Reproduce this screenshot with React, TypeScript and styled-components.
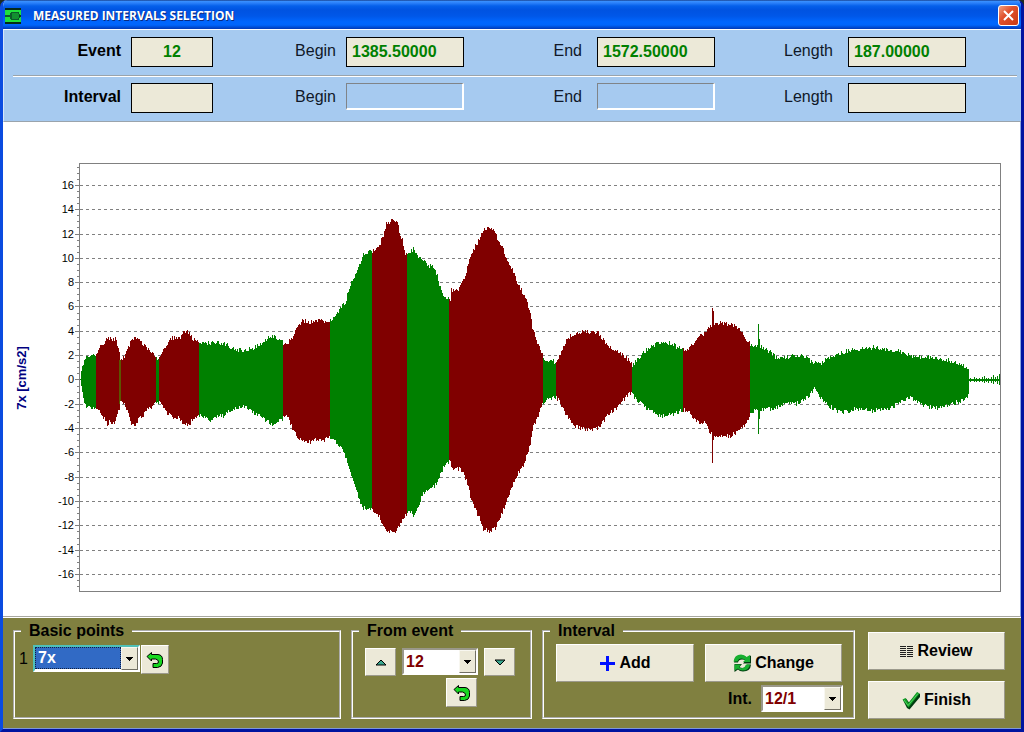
import React from "react";
import styled, { createGlobalStyle, css } from "styled-components";

const GlobalStyle = createGlobalStyle`
  * { box-sizing: border-box; }
  body {
    margin: 0;
    background: #1d2b1f;
    font-family: "Liberation Sans", Arial, sans-serif;
    font-size: 16px;
    line-height: 18px;
    color: #000;
  }
`;

const Window = styled.main`
  display: flex;
  flex-direction: column;
  min-height: 100vh;
  border: solid;
  border-width: 0 3px 3px;
  border-color: #0a4be0 #0014a0 #0014a0 #0a4be0;
  border-radius: 7px 7px 0 0;
  background: #fff;
  overflow: hidden;
`;

const TitleBar = styled.header`
  display: flex;
  align-items: center;
  gap: 12px;
  height: 29px;
  margin: 0 -3px;
  padding: 2px 5px 0;
  background: linear-gradient(
    #0a246a 0,
    #3b93ff 1px,
    #2a80fa 3px,
    #0560ea 6px,
    #0053e1 10px,
    #0057e8 16px,
    #0066fe 22px,
    #0065fb 25px,
    #0044c8 28px,
    #0138b4 29px
  );
`;

const Title = styled.h1`
  flex: 1;
  margin: 0;
  font: bold 12px/16px "Open Sans", sans-serif;
  color: #fff;
  text-shadow: 1px 1px #0a2a80;
`;

const CloseButton = styled.button`
  display: grid;
  place-items: center;
  width: 21px;
  height: 21px;
  padding: 0;
  border: 1px solid #fff;
  border-radius: 3px;
  background: linear-gradient(135deg, #f0a080, #e0512c 40%, #c83a14);
`;

const Header = styled.section`
  padding-top: 1px;
  border-top: 1px solid #fff;
  border-left: 1px solid #d6e6fa;
  border-bottom: 1px solid #9aa4ac;
  background: #a6caf0;
`;

const FieldRow = styled.div`
  display: grid;
  grid-template-columns: 127px 82px 133fr 118px 133fr 118px 133fr 118px 55fr;
  align-items: start;
  padding: 6px 0 8px;
`;

const Divider = styled.hr`
  height: 2px;
  margin: 0 4px 0 9px;
  border: 0;
  border-top: 1px solid #9aa4ac;
  border-bottom: 1px solid #fff;
`;

const FieldLabel = styled.label<{ $strong?: boolean; $gap: number }>`
  padding-top: 5px;
  padding-right: ${(p) => p.$gap}px;
  text-align: right;
  font-weight: ${(p) => (p.$strong ? "bold" : "normal")};
  color: ${(p) => (p.$strong ? "#000" : "#101828")};
`;

const Field = styled.input<{ $inset?: boolean; $center?: boolean }>`
  width: 100%;
  min-width: 0;
  height: 30px;
  padding: 0 5px;
  border: 1px solid #000;
  border-radius: 0;
  background: #ece9d8;
  font: bold 16px/18px "Liberation Sans", Arial, sans-serif;
  color: #008000;
  text-align: ${(p) => (p.$center ? "center" : "left")};
  ${(p) =>
    p.$inset &&
    css`
      height: 27px;
      border: 2px solid;
      border-color: #808488 #fff #fff #808488;
      border-width: 1px 2px 2px 1px;
      background: transparent;
    `}
`;

const ChartArea = styled.section`
  flex: 1;
  display: flex;
  align-items: flex-start;
  border-right: 1px solid #8aa6e0;
`;

const ChartSvg = styled.svg`
  display: block;
  width: 100%;
  height: auto;
  font-family: "Liberation Sans", Arial, sans-serif;
`;

const Footer = styled.footer`
  display: flex;
  align-items: flex-start;
  gap: 10px;
  padding: 4px 16px 9px 10px;
  border-top: 1px solid #fff;
  border-bottom: 1px solid #7f97d8;
  box-shadow: 0 -1px #a8a8a0;
  background: #808040;
`;

const Group = styled.fieldset<{ $width?: number }>`
  ${(p) => (p.$width ? `flex: none; width: ${p.$width}px;` : "flex: 1;")}
  min-width: 0;
  height: 97px;
  margin: 0;
  padding: 0;
  border: 2px groove #fff;
`;

const Legend = styled.legend`
  margin-left: 6px;
  padding: 0 8px;
  font-weight: bold;
`;

const PointRow = styled.div`
  display: flex;
  align-items: flex-start;
  gap: 1px;
  padding: 5px 4px;
`;

const PointLabel = styled.label`
  width: 13px;
  padding-top: 5px;
`;

const Stepper = styled.div`
  display: flex;
  gap: 6px;
  padding: 8px 0 0 12px;
`;

const ResetRow = styled.div`
  display: flex;
  padding: 2px 0 0 93px;
`;

const ActionRow = styled.div`
  display: flex;
  gap: 11px;
  padding: 4px 10px 0 12px;
`;

const PickRow = styled.div`
  display: flex;
  justify-content: flex-end;
  align-items: center;
  gap: 9px;
  padding: 3px 10px 0;
  font-weight: bold;
`;

const CommandColumn = styled.div`
  display: flex;
  flex-direction: column;
  gap: 11px;
  width: 137px;
  margin-left: 3px;
  padding-top: 10px;
`;

const Button = styled.button<{ $width?: number; $height?: number }>`
  display: flex;
  align-items: center;
  justify-content: center;
  gap: 4px;
  ${(p) => (p.$width ? `flex: none; width: ${p.$width}px;` : "flex: 1 0 auto;")}
  height: ${(p) => p.$height ?? 38}px;
  padding: 0;
  border: 1px solid;
  border-color: #fff #9c9a8c #9c9a8c #fff;
  border-radius: 0;
  background: #ece9d8;
  font: bold 16px/18px "Liberation Sans", Arial, sans-serif;
  color: #000;
`;

const SelectBox = styled.div<{ $width: number; $active?: boolean }>`
  display: grid;
  grid-template-columns: 1fr 17px;
  width: ${(p) => p.$width}px;
  height: 27px;
  border: 2px solid;
  border-color: ${(p) => (p.$active ? "#4fc0b8 #fff #fff #4fc0b8" : "#9a988a #fff #fff #9a988a")};
  background: #fff;
`;

const NativeSelect = styled.select<{ $active?: boolean }>`
  grid-area: 1 / 1 / 2 / 3;
  appearance: none;
  min-width: 0;
  margin: ${(p) => (p.$active ? "0 17px 1px 0" : "0")};
  padding: 0 2px;
  border: ${(p) => (p.$active ? "1px dotted #102040" : "0")};
  border-radius: 0;
  background: ${(p) => (p.$active ? "#316ac5" : "#fff")};
  font: bold 16px/18px "Liberation Sans", Arial, sans-serif;
  color: ${(p) => (p.$active ? "#fff" : "#800000")};
`;

const DropMark = styled.span`
  grid-area: 1 / 2 / 2 / 3;
  display: grid;
  place-items: center;
  border: 1px solid;
  border-color: #f8f7f0 #716f64 #716f64 #f8f7f0;
  background: #ece9d8;
  pointer-events: none;
`;

type PickerProps = { id: string; width: number; value: string; label?: string; active?: boolean };

function Picker({ id, width, value, label, active }: PickerProps) {
  return (
    <SelectBox $width={width} $active={active}>
      <NativeSelect id={id} aria-label={label} $active={active} defaultValue={value}>
        <option>{value}</option>
      </NativeSelect>
      <DropMark aria-hidden="true">
        <svg width="7" height="4" shapeRendering="crispEdges">
          <path d="M0 0h7v1h-7zM1 1h5v1h-5zM2 2h3v1h-3zM3 3h1v1h-1z" />
        </svg>
      </DropMark>
    </SelectBox>
  );
}

const AppIcon = () => (
  <svg width="16" height="16" shapeRendering="crispEdges" aria-hidden="true">
    <rect width="16" height="16" fill="#062a18" />
    <rect y="2" width="16" height="12" fill="#1fe03c" />
    <path d="M6 4h8v2h1v4h-1v2H6v-1H5V9H0V7h5V5h1z" fill="#0b5a2a" />
    <path d="M7 5h6v1h1v4h-1v1H7z" fill="#129030" />
    <rect x="14" y="7" width="2" height="2" fill="#06381c" />
  </svg>
);

const CloseIcon = () => (
  <svg width="13" height="13" viewBox="0 0 13 13" aria-hidden="true">
    <path d="M2 2l9 9M11 2l-9 9" stroke="#fff" strokeWidth="2" />
  </svg>
);

const ReturnIcon = () => (
  <svg width="18" height="18" viewBox="0 0 18 18" aria-hidden="true">
    <path
      d="M1 5.500L5.500 1.500v2H12q4.500 .5 4.500 5v3.500q-.5 4-5 4.500H7v-4h3.500q2 0 2-1.500 0-2.500-3-3h-4v2z"
      fill="#16d820"
      stroke="#000"
      strokeWidth="1"
    />
  </svg>
);

const StepIcon = ({ down }: { down?: boolean }) => (
  <svg width="12" height="7" viewBox="0 0 12 7" aria-hidden="true">
    <path d={down ? "M1 1h10l-5 5z" : "M1 6h10l-5-5z"} fill="#3aa890" stroke="#000" />
  </svg>
);

const PlusIcon = () => (
  <svg width="16" height="16" shapeRendering="crispEdges" aria-hidden="true">
    <path d="M7 1h3v6h6v3h-6v6H7v-6H1V7h6z" fill="#0010ff" />
  </svg>
);

const ChangeIcon = () => (
  <svg width="18" height="18" viewBox="0 0 18 18" aria-hidden="true">
    <g fill="#003c10">
      <path d="M1 8.500Q1 1.500 8 1.500q4 0 6 2L18 1.500V9.500h-8l2.500-3Q11 5.500 9 5.500 5.500 5.500 5 8.500z" />
      <path d="M18 10.500q-.5 7-8 7-3.500 0-5-2L1.500 18v-8H9l-2.500 3q1 1 3.500 1 3 0 4-3.500z" />
    </g>
    <g fill="#18b030">
      <path d="M.5 7.500Q1.500 .5 8 .5q3.500 0 5.500 2.500l3.500-2V8h-7l2-2Q11 4.500 8.500 4.500 5.500 4.500 4.500 7.500z" />
      <path d="M17 10.500q-1 6-7.500 6-3 0-4.500-2l-3.500 2v-6H8L6 13q1 1.500 3.500 1 2.500-.5 3.500-3.500z" />
    </g>
  </svg>
);

const ReviewIcon = () => (
  <svg width="13" height="13" shapeRendering="crispEdges" aria-hidden="true">
    <path
      d="M0 1.500h6M7 1.500h6M0 3.500h6M7 3.500h6M0 5.500h6M7 5.500h6M0 7.500h6M7 7.500h6M0 9.500h6M7 9.500h6M0 11.500h6M7 11.500h6"
      stroke="#202020"
    />
  </svg>
);

const FinishIcon = () => (
  <svg width="18" height="19" viewBox="0 0 18 19" aria-hidden="true">
    <path d="M1 9l3-1.500 3 4L15.500 1.500 18 3v3L7.500 18.500 5 17z" fill="#003c10" />
    <path d="M.5 8.500L3.500 7l3 5L15 1l2.500 1.500L6.500 16.500z" fill="#14a028" />
    <path d="M2 9l4 5.500L16 2.500" fill="none" stroke="#50d060" />
  </svg>
);

const GREEN = "#008000";
const MAROON = "#800000";

type Segment = { color: string; top: number[][]; bottom: number[][]; smooth?: boolean };

// Signal envelope: [x, y] knots of the upper and lower edges of each interval.
const segments: Segment[] = [
  { color: GREEN,
    top: [[80, 379], [82, 367], [84, 360], [86, 356], [90, 355], [93, 353], [96, 354]],
    bottom: [[80, 381], [82, 390], [84, 402], [86, 406], [89, 408], [96, 408]] },
  { color: MAROON,
    top: [[96, 355], [100, 347], [104, 342], [108, 338], [115, 339], [117, 344], [120, 354]],
    bottom: [[96, 408], [100, 413], [104, 419], [107, 424], [110, 421], [114, 424], [117, 413], [120, 405]] },
  { color: "#5c5400", top: [[119, 359], [121, 359]], bottom: [[119, 402], [121, 402]] },
  { color: MAROON,
    top: [[121, 360], [124, 358], [128, 347], [131, 340], [134, 338], [137, 339], [142, 344], [147, 348], [152, 353], [156, 357]],
    bottom: [[121, 402], [123, 402], [127, 412], [131, 423], [134, 425], [138, 420], [143, 415], [148, 409], [153, 407], [156, 402]] },
  { color: GREEN, top: [[156, 359], [159, 359]], bottom: [[156, 402], [159, 402]] },
  { color: MAROON,
    top: [[159, 358], [162, 352], [167, 343], [172, 338], [180, 337], [183, 332], [187, 331], [190, 335], [194, 340], [199, 342]],
    bottom: [[159, 402], [163, 408], [167, 414], [173, 417], [178, 418], [182, 423], [185, 425], [190, 423], [193, 419], [199, 416]] },
  { color: GREEN,
    top: [[199, 341], [204, 344], [212, 342], [220, 343], [227, 345], [233, 349], [245, 351], [253, 348], [260, 345], [265, 341], [271, 336], [275, 338], [280, 339], [283, 342]],
    bottom: [[199, 415], [210, 420], [217, 417], [223, 416], [230, 410], [240, 407], [247, 408], [253, 412], [260, 417], [267, 421], [271, 425], [275, 422], [283, 420]] },
  { color: MAROON,
    top: [[283, 346], [288, 343], [292, 337], [297, 327], [302, 321], [310, 322], [320, 319], [325, 322], [330, 321]],
    bottom: [[283, 417], [287, 417], [292, 428], [297, 438], [305, 442], [312, 442], [317, 439], [323, 440], [330, 436]] },
  { color: GREEN,
    top: [[330, 320], [335, 317], [340, 309], [345, 302], [348, 292], [352, 280], [357, 272], [360, 262], [363, 254], [367, 252], [372, 250]],
    bottom: [[330, 437], [335, 442], [342, 448], [347, 462], [352, 477], [356, 490], [360, 502], [363, 508], [372, 511]] },
  { color: MAROON,
    top: [[372, 251], [377, 248], [380, 243], [384, 233], [386, 224], [390, 221], [393, 218], [397, 222], [399, 232], [402, 240], [404, 252], [407, 256]],
    bottom: [[372, 510], [377, 513], [380, 518], [383, 528], [388, 531], [393, 533], [398, 528], [403, 518], [407, 512]] },
  { color: GREEN,
    top: [[407, 255], [410, 252], [413, 248], [417, 255], [422, 260], [425, 263], [430, 266], [433, 268], [437, 275], [440, 288], [443, 296], [449, 300]],
    bottom: [[407, 512], [411, 513], [413, 515], [417, 508], [420, 500], [423, 492], [428, 491], [433, 487], [437, 483], [440, 474], [443, 467], [449, 461]] },
  { color: MAROON,
    top: [[449, 300], [450, 300], [451, 290], [458, 289], [462, 283], [465, 277], [468, 262], [473, 250], [480, 237], [482, 231], [486, 228], [489, 227], [493, 229], [497, 238], [502, 248], [507, 259], [513, 272], [518, 285], [525, 297], [530, 313], [532, 328], [537, 344], [543, 357]],
    bottom: [[449, 460], [450, 460], [451, 468], [462, 470], [467, 483], [470, 497], [475, 510], [480, 520], [482, 528], [489, 532], [495, 528], [498, 522], [503, 510], [508, 497], [513, 483], [518, 473], [523, 465], [527, 455], [530, 443], [532, 430], [537, 417], [543, 402]] },
  { color: GREEN, top: [[543, 359], [556, 362]], bottom: [[543, 402], [548, 399], [556, 397]] },
  { color: MAROON,
    top: [[556, 362], [560, 355], [563, 347], [568, 338], [573, 334], [580, 332], [590, 332], [598, 333], [603, 340], [608, 345], [613, 350], [620, 353], [627, 359], [632, 363]],
    bottom: [[556, 397], [562, 407], [567, 417], [572, 423], [578, 428], [588, 430], [598, 428], [603, 421], [610, 412], [618, 407], [625, 398], [630, 393], [632, 394]] },
  { color: GREEN,
    top: [[632, 365], [638, 358], [645, 351], [653, 345], [660, 343], [665, 342], [673, 345], [683, 350]],
    bottom: [[632, 395], [638, 402], [647, 408], [653, 413], [660, 416], [667, 416], [673, 414], [683, 410]] },
  { color: MAROON,
    top: [[683, 350], [688, 349], [693, 343], [698, 337], [705, 333], [710, 326], [713, 324], [720, 323], [727, 324], [733, 325], [740, 331], [745, 338], [750, 343]],
    bottom: [[683, 410], [690, 413], [695, 420], [700, 423], [705, 422], [708, 430], [713, 435], [720, 436], [730, 436], [735, 433], [740, 430], [745, 423], [750, 415]] },
  { color: GREEN,
    top: [[750, 344], [757, 346], [763, 348], [770, 352], [775, 357], [783, 358], [790, 357], [797, 355], [803, 356], [810, 361], [818, 364], [825, 360], [833, 355], [840, 353], [850, 350], [863, 349], [875, 347], [883, 349], [893, 350], [903, 353], [910, 356], [923, 357], [940, 358], [950, 361], [960, 365], [969, 368]],
    bottom: [[750, 413], [757, 410], [770, 409], [780, 406], [787, 403], [795, 404], [803, 401], [810, 394], [814, 389], [820, 397], [827, 405], [837, 411], [843, 412], [857, 409], [873, 411], [890, 408], [900, 402], [910, 397], [917, 402], [927, 407], [937, 408], [947, 405], [960, 401], [969, 395]] },
  { color: GREEN, smooth: true, top: [[969, 379], [1000, 379]], bottom: [[969, 381], [1000, 381]] },
];

function edgeAt(knots: number[][], x: number) {
  const next = knots.findIndex((k) => k[0] > x);
  if (next <= 0) return knots[knots.length - 1][1];
  const [x0, y0] = knots[next - 1];
  const [x1, y1] = knots[next];
  return y0 + ((y1 - y0) * (x - x0)) / (x1 - x0);
}

// Repeatable noise in the range -1..1 gives the edges their ragged outline.
function noise(n: number) {
  const s = Math.sin(n * 127.1 + 11.7) * 43758.5453;
  return (s - Math.floor(s)) * 2 - 1;
}

function segmentPath({ top, bottom, smooth }: Segment) {
  const start = top[0][0];
  const end = top[top.length - 1][0];
  const swing = smooth ? 0 : 2.3;
  let d = "";
  for (let x = start; x < end; x++) {
    const t = Math.round(edgeAt(top, x) + noise(x) * swing);
    const b = Math.round(edgeAt(bottom, x) + noise(x + 5000) * swing);
    d += `M${x} ${t}h1V${Math.max(b, t + 1)}h-1z`;
  }
  return d;
}

const yOf = (value: number) => Math.round(379.45 - 12.16 * value);
const majors = Array.from({ length: 17 }, (_, i) => 16 - i * 2);
const minors = Array.from({ length: 70 }, (_, i) => 17.5 - i * 0.5).filter((v) => v % 2 !== 0 && v >= -17);

function Chart() {
  return (
    <ChartSvg viewBox="3 122 1017 494" role="img" aria-label="7x signal in cm/s2">
      <g shapeRendering="crispEdges">
        {majors.map((v) => (
          <path key={v} d={`M80 ${yOf(v) + 0.5}H1000`} stroke="#808080" strokeDasharray="3 3" />
        ))}
        {majors.map((v) => (
          <path key={v} d={`M75 ${yOf(v) + 0.5}h4`} stroke="#808080" />
        ))}
        {minors.map((v) => (
          <path key={v} d={`M77 ${yOf(v) + 0.5}h2`} stroke="#808080" />
        ))}
        {segments.map((s, i) => (
          <path key={i} d={segmentPath(s)} fill={s.color} />
        ))}
        <path d="M712 308h1v155h-1zM713 311h1v129h-1z" fill={MAROON} />
        <path d="M758 324h1v110h-1zM759 339h1v80h-1z" fill={GREEN} />
        <path d="M970 378h1v4h-1zM974 377h1v5h-1zM976 378h1v4h-1zM979 378h1v4h-1zM982 377h1v5h-1zM984 376h1v7h-1zM986 378h1v4h-1zM988 378h1v5h-1zM991 377h1v6h-1zM993 375h1v9h-1zM995 377h1v5h-1zM997 376h1v8h-1zM999 374h1v11h-1z" fill={GREEN} />
        <rect x="79.500" y="163.500" width="921" height="428" fill="none" stroke="#808080" />
      </g>
      <g fontSize="11" textAnchor="end">
        {majors.map((v) => (
          <text key={v} x="74" y={yOf(v) + 4}>{v}</text>
        ))}
      </g>
      <text transform="translate(26 378) rotate(-90)" textAnchor="middle" fontSize="13" fontWeight="bold" fill="#000080">
        7x [cm/s2]
      </text>
    </ChartSvg>
  );
}

type RowProps = { name: string; values: string[]; inset?: boolean };

function Readouts({ name, values, inset }: RowProps) {
  const id = name.toLowerCase();
  const ranges = [
    { label: "Begin", gap: 10, inset },
    { label: "End", gap: 15, inset },
    { label: "Length", gap: 15, inset: false },
  ];
  return (
    <FieldRow>
      <FieldLabel $strong $gap={10} htmlFor={id}>{name}</FieldLabel>
      <Field id={id} $center readOnly value={values[0]} />
      {ranges.map((r, i) => (
        <React.Fragment key={r.label}>
          <FieldLabel $gap={r.gap} htmlFor={`${id}-${r.label}`}>{r.label}</FieldLabel>
          <Field id={`${id}-${r.label}`} $inset={r.inset} readOnly value={values[i + 1]} />
        </React.Fragment>
      ))}
    </FieldRow>
  );
}

export default function App() {
  return (
    <>
      <GlobalStyle />
      <Window>
        <TitleBar>
          <AppIcon />
          <Title>MEASURED INTERVALS SELECTION</Title>
          <CloseButton aria-label="Close"><CloseIcon /></CloseButton>
        </TitleBar>
        <Header>
          <Readouts name="Event" values={["12", "1385.50000", "1572.50000", "187.00000"]} />
          <Divider />
          <Readouts name="Interval" values={["", "", "", ""]} inset />
        </Header>
        <ChartArea>
          <Chart />
        </ChartArea>
        <Footer>
          <Group>
            <Legend>Basic points</Legend>
            <PointRow>
              <PointLabel htmlFor="point">1</PointLabel>
              <Picker id="point" width={107} value="7x" active />
              <Button $width={28} $height={29} aria-label="Reset point"><ReturnIcon /></Button>
            </PointRow>
          </Group>
          <Group $width={181}>
            <Legend>From event</Legend>
            <Stepper>
              <Button $width={31} $height={28} aria-label="Previous event"><StepIcon /></Button>
              <Picker id="from-event" width={76} value="12" label="From event" />
              <Button $width={31} $height={28} aria-label="Next event"><StepIcon down /></Button>
            </Stepper>
            <ResetRow>
              <Button $width={31} $height={29} aria-label="Reset event"><ReturnIcon /></Button>
            </ResetRow>
          </Group>
          <Group $width={313}>
            <Legend>Interval</Legend>
            <ActionRow>
              <Button $width={138}><PlusIcon />Add</Button>
              <Button $width={137}><ChangeIcon />Change</Button>
            </ActionRow>
            <PickRow>
              <label htmlFor="int">Int.</label>
              <Picker id="int" width={82} value="12/1" />
            </PickRow>
          </Group>
          <CommandColumn>
            <Button><ReviewIcon />Review</Button>
            <Button><FinishIcon />Finish</Button>
          </CommandColumn>
        </Footer>
      </Window>
    </>
  );
}
